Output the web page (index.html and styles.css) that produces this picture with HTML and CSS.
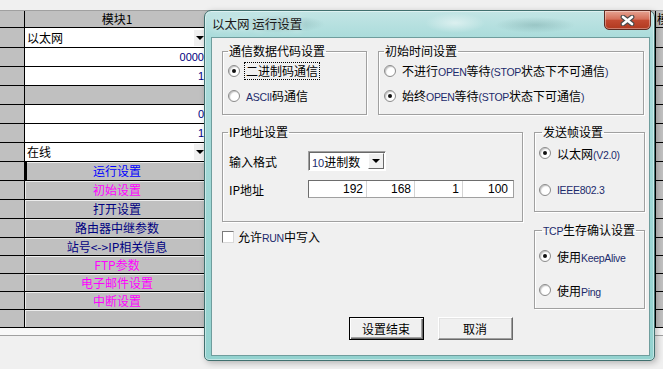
FILE: index.html
```html
<!DOCTYPE html>
<html lang="zh-CN">
<head>
  <meta charset="UTF-8">
  <meta name="viewport" content="width=device-width, initial-scale=1.0">
  <title>以太网 运行设置</title>
  <link rel="stylesheet" href="styles.css">
</head>
<body>
  <div class="screen">
    <!-- parameter grid behind the dialog -->
    <div class="grid">
      <div class="row head"><div class="rh"></div><div class="cell">模块1</div><div class="rest"></div><div class="side">模块2</div></div>
      <div class="row tall"><div class="rh"></div><div class="cell combo">以太网<span class="drop"></span></div><div class="rest"></div><div class="side"></div></div>
      <div class="row"><div class="rh"></div><div class="cell num">0000</div><div class="rest"></div><div class="side"></div></div>
      <div class="row"><div class="rh"></div><div class="cell num">1</div><div class="rest"></div><div class="side"></div></div>
      <div class="row"><div class="rh"></div><div class="cell off"></div><div class="rest"></div><div class="side"></div></div>
      <div class="row"><div class="rh"></div><div class="cell num">0</div><div class="rest"></div><div class="side"></div></div>
      <div class="row"><div class="rh"></div><div class="cell num">1</div><div class="rest"></div><div class="side"></div></div>
      <div class="row"><div class="rh"></div><div class="cell combo">在线<span class="drop"></span></div><div class="rest"></div><div class="side"></div></div>
      <div class="row"><div class="rh"></div><div class="cell act cur blue">运行设置</div><div class="rest"></div><div class="side"></div></div>
      <div class="row"><div class="rh"></div><div class="cell act pink">初始设置</div><div class="rest"></div><div class="side"></div></div>
      <div class="row"><div class="rh"></div><div class="cell act navy">打开设置</div><div class="rest"></div><div class="side"></div></div>
      <div class="row"><div class="rh"></div><div class="cell act navy">路由器中继参数</div><div class="rest"></div><div class="side"></div></div>
      <div class="row short"><div class="rh"></div><div class="cell act navy">站号&lt;-&gt;IP相关信息</div><div class="rest"></div><div class="side"></div></div>
      <div class="row short"><div class="rh"></div><div class="cell act pink">FTP参数</div><div class="rest"></div><div class="side"></div></div>
      <div class="row short"><div class="rh"></div><div class="cell act pink">电子邮件设置</div><div class="rest"></div><div class="side"></div></div>
      <div class="row short"><div class="rh"></div><div class="cell act pink">中断设置</div><div class="rest"></div><div class="side"></div></div>
      <div class="row short"><div class="rh"></div><div class="cell act"></div><div class="rest"></div><div class="side"></div></div>
    </div>
    <div class="hscroll"></div>

    <!-- Ethernet run settings dialog -->
    <div class="dialog">
      <div class="title">以太网 运行设置</div>
      <div class="close">
        <svg width="15" height="11" viewBox="0 0 15 11">
          <path d="M3 2 L12 9 M12 2 L3 9" stroke="#4b4b4b" stroke-width="4.8" stroke-linecap="round"/>
          <path d="M3 2 L12 9 M12 2 L3 9" stroke="#fff" stroke-width="2.6" stroke-linecap="round"/>
        </svg>
      </div>

      <div class="client">
        <div class="line">
          <fieldset class="grp g-code">
            <legend>通信数据代码设置</legend>
            <label class="opt"><span class="radio on"></span><span class="focus">二进制码通信</span></label>
            <label class="opt"><span class="radio"></span><span><span class="en">ASCII</span>码通信</span></label>
          </fieldset>
          <fieldset class="grp g-time">
            <legend>初始时间设置</legend>
            <label class="opt"><span class="radio"></span><span>不进行<span class="en">OPEN</span>等待<span class="en">(STOP</span>状态下不可通信<span class="en">)</span></span></label>
            <label class="opt"><span class="radio on"></span><span>始终<span class="en">OPEN</span>等待<span class="en">(STOP</span>状态下可通信<span class="en">)</span></span></label>
          </fieldset>
        </div>

        <div class="line">
          <div class="col-left">
            <fieldset class="grp g-ip">
              <legend>IP地址设置</legend>
              <div class="field">
                <span class="lbl">输入格式</span>
                <div class="select"><span><span class="en">10</span>进制数</span><span class="arrow"></span></div>
              </div>
              <div class="field ip-row">
                <span class="lbl">IP地址</span>
                <div class="ip">
                  <span class="oct first">192</span>
                  <span class="oct">168</span>
                  <span class="oct">1</span>
                  <span class="oct last">100</span>
                </div>
              </div>
            </fieldset>
            <label class="check"><span class="box"></span><span>允许<span class="en">RUN</span>中写入</span></label>
          </div>

          <div class="col-right">
            <fieldset class="grp g-frame">
              <legend>发送帧设置</legend>
              <label class="opt"><span class="radio on"></span><span>以太网<span class="en">(V2.0)</span></span></label>
              <label class="opt"><span class="radio"></span><span class="en">IEEE802.3</span></label>
            </fieldset>
            <fieldset class="grp g-tcp">
              <legend><span class="en">TCP</span>生存确认设置</legend>
              <label class="opt"><span class="radio on"></span><span>使用<span class="en">KeepAlive</span></span></label>
              <label class="opt"><span class="radio"></span><span>使用<span class="en">Ping</span></span></label>
            </fieldset>
          </div>
        </div>

        <div class="buttons">
          <button class="btn default">设置结束</button>
          <button class="btn">取消</button>
        </div>
      </div>
    </div>
  </div>
</body>
</html>
```

FILE: styles.css
```css
* {
  box-sizing: border-box;
}
body {
  margin: 0;
  width: 663px;
  height: 369px;
  overflow: hidden;
  background: #f0f0f0;
  font-family: "Noto Sans CJK SC", "Liberation Sans", sans-serif;
  font-size: 12px;
  color: #000;
}
.screen {
  position: relative;
  height: 369px;
  padding-top: 10px;
}

/* grid */
.grid {
  border-top: 1px solid #a0a0a0;
}
.row {
  display: flex;
  height: 19px;
  line-height: 18px;
  border-bottom: 1px solid #000;
}
.row.head {
  height: 17px;
  line-height: 16px;
}
.row.tall {
  height: 20px;
  line-height: 19px;
}
.row.short {
  height: 18px;
  line-height: 17px;
}
.rh {
  width: 25px;
  background: #c0c0c0;
  border-right: 1px solid #000;
}
.cell {
  display: flex;
  align-items: center;
  width: 181px;
  padding: 0 2px;
  background: #fff;
  white-space: nowrap;
  overflow: hidden;
}
.head .cell {
  justify-content: center;
  padding-left: 5px;
  background: #c0c0c0;
}
.cell.num {
  justify-content: flex-end;
  color: #000080;
  font-family: "Liberation Sans", sans-serif;
  font-size: 11px;
}
.cell.off {
  background: #c0c0c0;
}
.cell.act {
  justify-content: center;
  padding-left: 5px;
  background: #c0c0c0;
  box-shadow: inset 1px 1px 0 #ececec;
}
.cell.cur {
  box-shadow: inset 2px 0 0 #000, inset 1px 1px 0 #ececec;
}
.blue { color: #0000ff; }
.pink { color: #ff00ff; }
.navy { color: #000080; }
.drop {
  position: relative;
  flex: none;
  width: 12px;
  height: 16px;
  margin: 0 -2px 0 auto;
  background: #f0f0f0;
}
.drop::after {
  content: "";
  position: absolute;
  left: 2px;
  top: 6px;
  border-left: 4px solid transparent;
  border-right: 4px solid transparent;
  border-top: 4px solid #000;
}
.rest {
  flex: 1;
  background: #c0c0c0;
}
.side {
  width: 8px;
  padding-left: 1px;
  background: #c0c0c0;
  border-left: 1px solid #000;
  overflow: hidden;
  white-space: nowrap;
}
.hscroll {
  height: 8px;
  background: #f8f8f8;
  border-bottom: 1px solid #a0a0a0;
}

/* dialog window */
.dialog {
  position: absolute;
  left: 204px;
  top: 10px;
  width: 451px;
  height: 351px;
  display: flex;
  flex-direction: column;
  padding: 0 4px 4px 6px;
  border: 1px solid #41706f;
  border-radius: 7px 7px 5px 5px;
  background:
    radial-gradient(45px 9px at 75px 13px, rgba(70, 120, 120, .35), transparent),
    radial-gradient(40px 8px at 330px 14px, rgba(70, 120, 120, .25), transparent),
    radial-gradient(30px 10px at 250px 12px, rgba(255, 255, 255, .5), transparent),
    linear-gradient(#c3e5e5, #abdcdb 26px, #93d2cf);
  box-shadow: inset 0 0 0 1px rgba(255, 255, 255, .45), 2px 2px 6px rgba(0, 0, 0, .25);
}
.title {
  height: 26px;
  line-height: 26px;
  padding-left: 1px;
  font-size: 12.5px;
  color: #1a1a1a;
  text-shadow: 0 0 6px rgba(255, 255, 255, .9);
}
.close {
  position: absolute;
  top: -1px;
  right: 3px;
  width: 47px;
  height: 20px;
  display: flex;
  align-items: center;
  justify-content: center;
  border: 1px solid #5d2b22;
  border-radius: 0 0 5px 5px;
  background: linear-gradient(#e6a392, #d5705a 45%, #c34a31 52%, #b0391f);
  box-shadow: inset 0 0 0 1px rgba(255, 255, 255, .35);
}
.client {
  flex: 1;
  padding: 6px 0 0 10px;
  background: #f0f0f0;
  border: 1px solid #6f9d9d;
}
.en {
  font-family: "Liberation Sans", sans-serif;
  font-size: 10.5px;
  letter-spacing: -0.3px;
  color: #1c2b6c;
}

.line {
  display: flex;
  gap: 11px;
}
.line + .line {
  margin-top: 10px;
}
.grp {
  margin: 0;
  min-width: 0;
  padding: 0 5px 6px;
  border: 1px solid #a0a0a0;
  box-shadow: 1px 1px 0 #fff, inset 1px 1px 0 #fff;
}
.grp legend {
  padding: 0 1px;
  line-height: 14px;
}
.g-code { width: 145px; }
.g-time { width: 266px; }
.g-frame legend,
.g-tcp legend {
  margin-left: 3px;
}
.opt {
  display: flex;
  align-items: center;
  gap: 6px;
  height: 25px;
  white-space: nowrap;
}
.radio {
  position: relative;
  flex: none;
  width: 12px;
  height: 12px;
  border-radius: 50%;
  border: 1px solid #8c8c8c;
  background: radial-gradient(circle at 60% 60%, #fff 40%, #e6e6e6);
  box-shadow: inset 1px 1px 1px rgba(0, 0, 0, .2);
}
.radio.on::after {
  content: "";
  position: absolute;
  left: 3px;
  top: 3px;
  width: 4px;
  height: 4px;
  border-radius: 50%;
  background: #111;
}
.focus {
  margin-left: -2px;
  padding: 0 1px;
  line-height: 16px;
  border: 1px dotted #000;
}

.col-left {
  width: 301px;
}
.col-right {
  width: 111px;
}
.g-ip {
  padding: 12px 5px 23px;
}
.field {
  display: flex;
  align-items: center;
  height: 20px;
}
.field.ip-row {
  height: 18px;
  margin-top: 9px;
}
.lbl {
  width: 80px;
  padding-left: 1px;
}
.select {
  display: flex;
  align-items: center;
  justify-content: space-between;
  width: 78px;
  height: 20px;
  padding: 0 1px 0 3px;
  background: #fff;
  border: 1px solid;
  border-color: #a0a0a0 #fff #fff #a0a0a0;
  box-shadow: inset 1px 1px 0 #696969;
}
.select .en {
  font-size: 11px;
  letter-spacing: 0;
}
.arrow {
  position: relative;
  width: 16px;
  height: 16px;
  background: #f0f0f0;
  border: 1px solid;
  border-color: #fff #696969 #696969 #fff;
}
.arrow::after {
  content: "";
  position: absolute;
  left: 3px;
  top: 5px;
  border-left: 4px solid transparent;
  border-right: 4px solid transparent;
  border-top: 4px solid #000;
}
.ip {
  display: flex;
  width: 206px;
  height: 18px;
  background: #fff;
  border: 1px solid #6d6d6d;
  border-right-color: #a0a0a0;
  border-bottom-color: #a0a0a0;
}
.oct {
  width: 48px;
  padding-right: 3px;
  text-align: right;
  line-height: 16px;
  font-family: "Liberation Sans", sans-serif;
  border-right: 1px solid #d4d4d4;
}
.oct.first { width: 58px; }
.oct.last {
  width: 48px;
  border-right: none;
}
.check {
  display: flex;
  align-items: center;
  gap: 4px;
  height: 13px;
  margin-top: 8px;
}
.box {
  width: 12px;
  height: 12px;
  background: #fff;
  border: 1px solid;
  border-color: #7a7a7a #d8d8d8 #d8d8d8 #7a7a7a;
}
.g-frame {
  padding: 2px 4px 9px;
}
.g-frame .opt {
  height: 24px;
}
.g-frame .opt + .opt {
  margin-top: 13px;
}
.g-tcp {
  margin-top: 11px;
  padding: 6px 4px 6px;
}
.g-tcp .opt {
  height: 24px;
}
.g-tcp .opt + .opt {
  margin-top: 10px;
}

.buttons {
  display: flex;
  justify-content: center;
  gap: 14px;
  margin-top: 8px;
  padding-right: 10px;
}
.btn {
  width: 75px;
  height: 23px;
  padding: 0;
  font: inherit;
  color: #000;
  background: #f0f0f0;
  border: 1px solid;
  border-color: #fff #696969 #696969 #fff;
  box-shadow: inset -1px -1px 0 #a0a0a0, inset 1px 1px 0 #e3e3e3;
}
.btn.default {
  border-color: #000;
  box-shadow: inset 1px 1px 0 #fff, inset -1px -1px 0 #696969, inset -2px -2px 0 #a0a0a0;
}
```
